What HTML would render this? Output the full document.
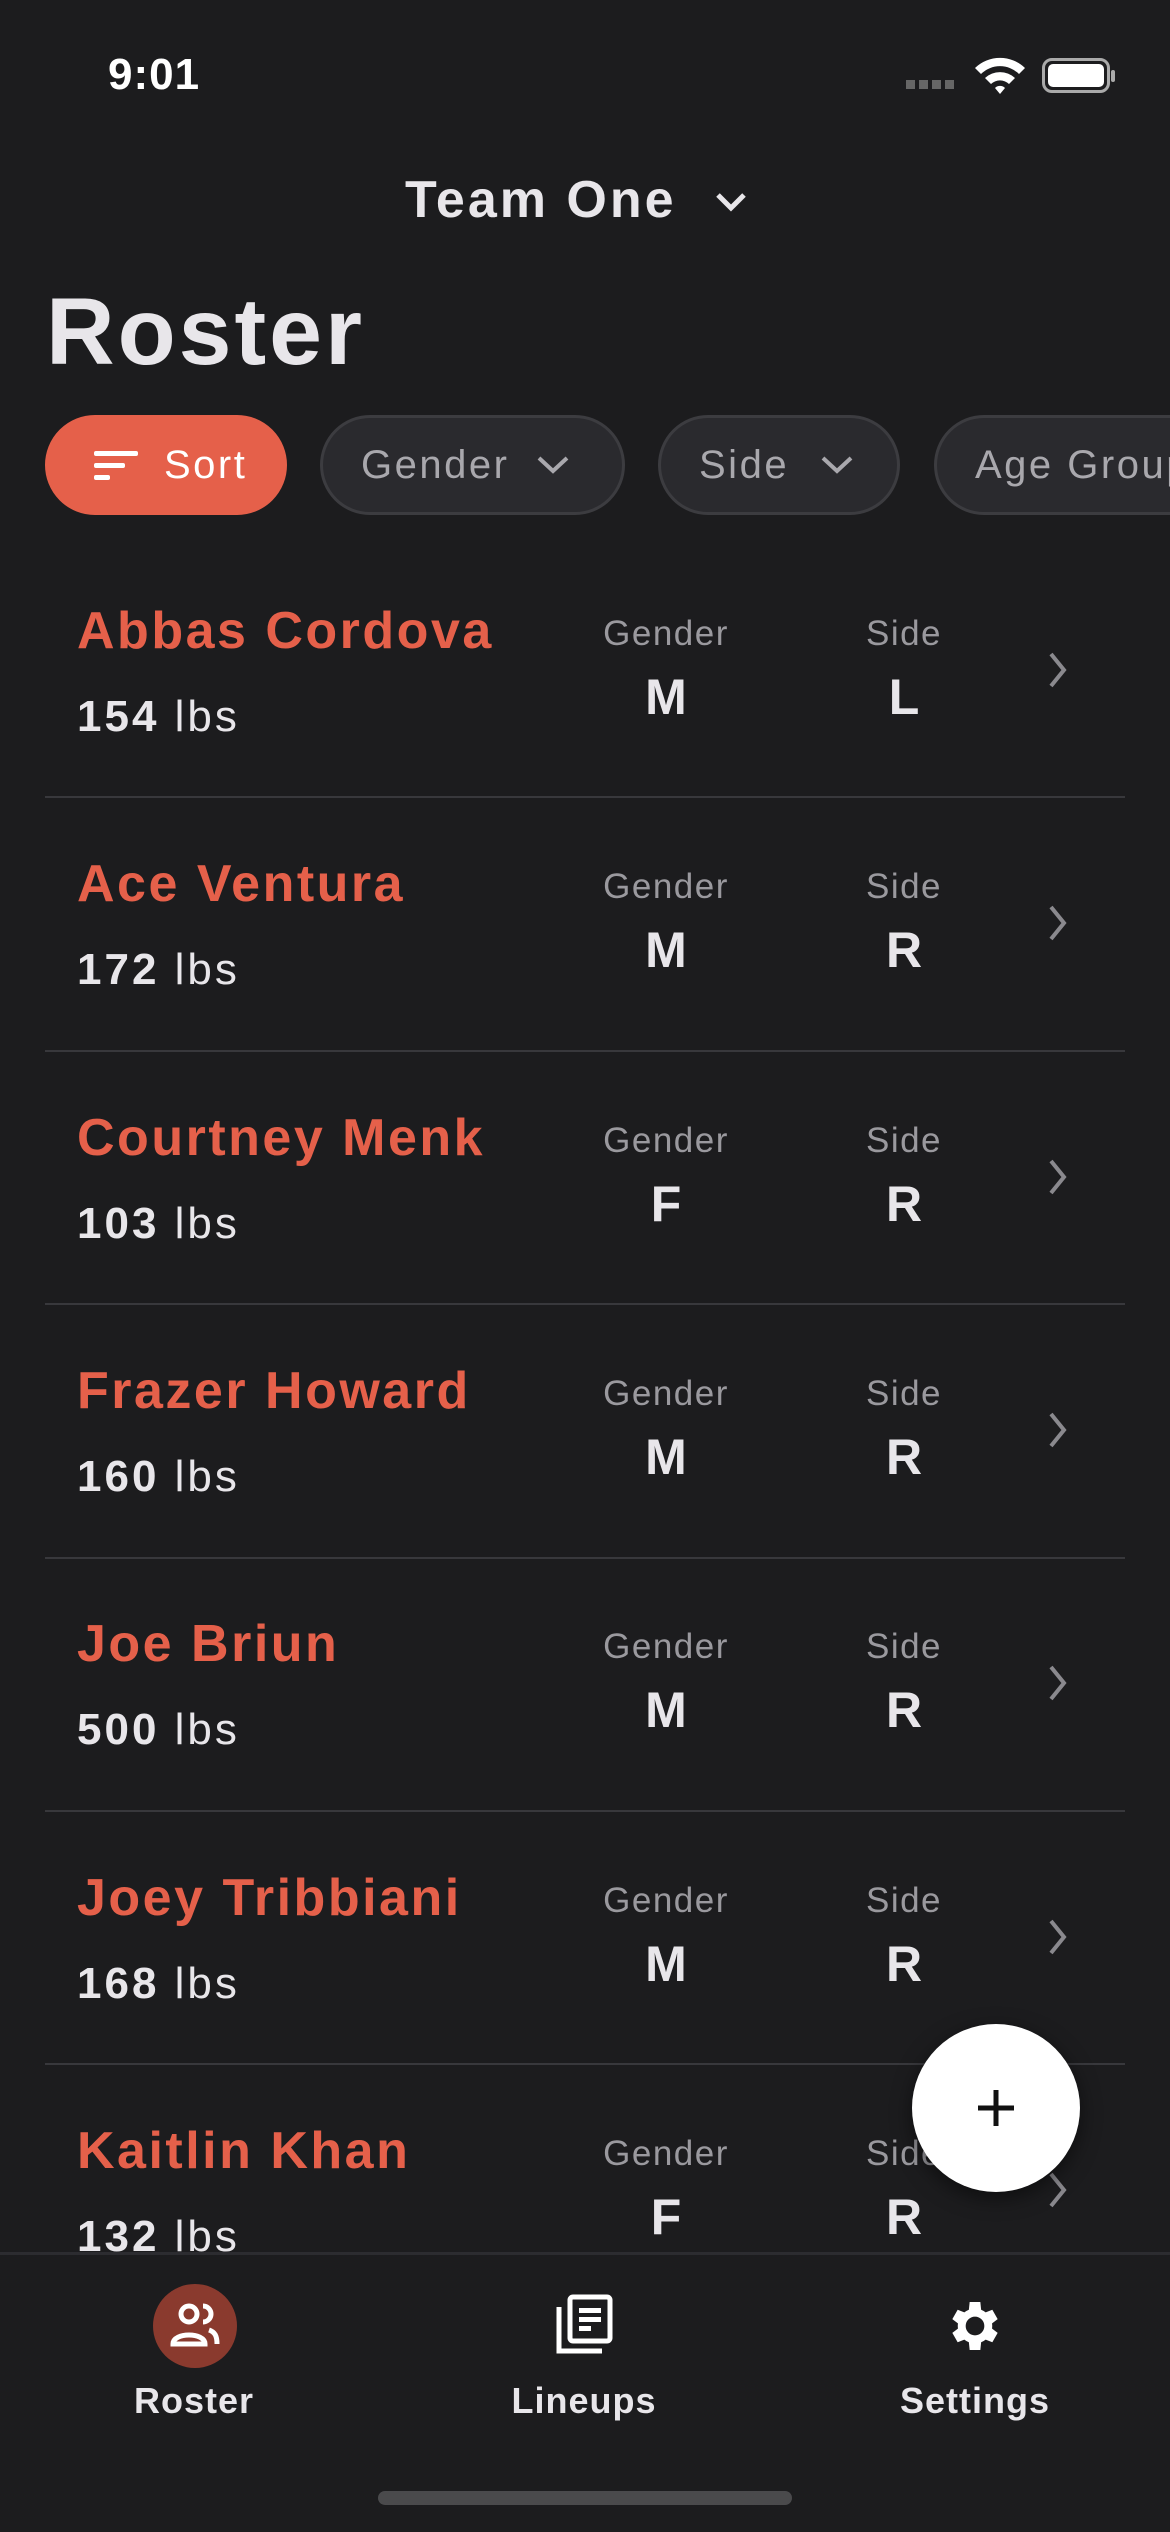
<!DOCTYPE html>
<html><head><meta charset="utf-8"><style>
*{margin:0;padding:0;box-sizing:border-box}
body{width:1170px;height:2532px;background:#1c1c1e;font-family:"Liberation Sans",sans-serif;color:#e8e6ea;position:relative;overflow:hidden}
.abs{position:absolute}
.chip{position:absolute;top:415px;height:100px;border-radius:50px;border:3px solid #3c3c40;background:#2a2a2e;color:#a9a8ad;font-size:40px;letter-spacing:2.5px;display:flex;align-items:center;padding-left:38px;white-space:nowrap}
.row{position:absolute;left:0;width:1170px;height:253px}
.name{position:absolute;left:77px;font-size:52px;letter-spacing:2.5px;font-weight:bold;color:#e5604a}
.lbs{position:absolute;left:77px;font-size:44px;letter-spacing:3px;color:#e8e6ea}
.lbs b{font-weight:bold}
.lab{position:absolute;width:200px;text-align:center;font-size:35px;letter-spacing:1.5px;color:#9a999e}
.val{position:absolute;width:200px;text-align:center;font-size:50px;font-weight:bold;color:#e8e6ea}
.sep{position:absolute;left:45px;width:1080px;height:2px;background:#38383c}
.nav{position:absolute;font-size:36px;letter-spacing:1px;font-weight:bold;color:#e8e6ea;width:300px;text-align:center;top:2380px}
</style></head><body>
<div class="abs" style="left:108px;top:50px;font-size:44px;letter-spacing:1px;font-weight:bold;color:#fff">9:01</div>
<div class="abs" style="left:906px;top:80px;width:50px;height:9px;background:repeating-linear-gradient(90deg,#666 0 9px,transparent 9px 13px)"></div>
<svg class="abs" style="left:972px;top:54px" width="56" height="42" viewBox="0 0 56 42"><path d="M3 14 A36 36 0 0 1 53 14 L47 20 A27 27 0 0 0 9 20Z M13 24 A22 22 0 0 1 43 24 L37 30 A13 13 0 0 0 19 30Z M23 34 A7 7 0 0 1 33 34 L28 40Z" fill="#fff"/></svg>
<div class="abs" style="left:1042px;top:58px;width:68px;height:35px;border:3px solid #aaa;border-radius:10px;padding:3px"><div style="width:100%;height:100%;background:#fff;border-radius:5px"></div></div>
<div class="abs" style="left:1111px;top:70px;width:4px;height:12px;background:#aaa;border-radius:2px"></div>
<div class="abs" style="left:405px;top:170px;font-size:52px;letter-spacing:3px;font-weight:bold">Team One</div>
<svg class="abs" style="left:714px;top:190px" width="34" height="24"><path d="M4 5 L17 18 L30 5" stroke="#e8e6ea" stroke-width="5" fill="none"/></svg>
<div class="abs" style="left:46px;top:278px;font-size:95px;letter-spacing:3px;font-weight:bold">Roster</div>
<div class="chip" style="left:45px;width:242px;background:#e5604a;border-color:#e5604a;color:#fff;padding-left:44px">
<svg width="48" height="40" style="margin-right:24px"><rect x="2" y="6" width="44" height="5" rx="2" fill="#fff"/><rect x="2" y="18" width="31" height="5" rx="2" fill="#fff"/><rect x="2" y="30" width="16" height="5" rx="2" fill="#fff"/></svg>Sort</div>
<div class="chip" style="left:320px;width:305px">Gender<svg width="40" height="24" style="margin-left:24px"><path d="M6 5 L20 18 L34 5" stroke="#a9a8ad" stroke-width="4" fill="none"/></svg></div>
<div class="chip" style="left:658px;width:242px">Side<svg width="40" height="24" style="margin-left:28px"><path d="M6 5 L20 18 L34 5" stroke="#a9a8ad" stroke-width="4" fill="none"/></svg></div>
<div class="chip" style="left:934px;width:320px">Age Group</div>

<div class="row" style="top:544px"><div class="name" style="top:57px">Abbas Cordova</div><div class="lbs" style="top:148px"><b>154</b> lbs</div><div class="lab" style="left:566px;top:70px">Gender</div><div class="val" style="left:566px;top:124px">M</div><div class="lab" style="left:804px;top:70px">Side</div><div class="val" style="left:804px;top:124px">L</div><svg class="abs" style="left:1046px;top:106px" width="24" height="40"><path d="M5 4 L18 20 L5 36" stroke="#8a898e" stroke-width="4" fill="none"/></svg></div>
<div class="sep" style="top:796px"></div>
<div class="row" style="top:797px"><div class="name" style="top:57px">Ace Ventura</div><div class="lbs" style="top:148px"><b>172</b> lbs</div><div class="lab" style="left:566px;top:70px">Gender</div><div class="val" style="left:566px;top:124px">M</div><div class="lab" style="left:804px;top:70px">Side</div><div class="val" style="left:804px;top:124px">R</div><svg class="abs" style="left:1046px;top:106px" width="24" height="40"><path d="M5 4 L18 20 L5 36" stroke="#8a898e" stroke-width="4" fill="none"/></svg></div>
<div class="sep" style="top:1050px"></div>
<div class="row" style="top:1051px"><div class="name" style="top:57px">Courtney Menk</div><div class="lbs" style="top:148px"><b>103</b> lbs</div><div class="lab" style="left:566px;top:70px">Gender</div><div class="val" style="left:566px;top:124px">F</div><div class="lab" style="left:804px;top:70px">Side</div><div class="val" style="left:804px;top:124px">R</div><svg class="abs" style="left:1046px;top:106px" width="24" height="40"><path d="M5 4 L18 20 L5 36" stroke="#8a898e" stroke-width="4" fill="none"/></svg></div>
<div class="sep" style="top:1303px"></div>
<div class="row" style="top:1304px"><div class="name" style="top:57px">Frazer Howard</div><div class="lbs" style="top:148px"><b>160</b> lbs</div><div class="lab" style="left:566px;top:70px">Gender</div><div class="val" style="left:566px;top:124px">M</div><div class="lab" style="left:804px;top:70px">Side</div><div class="val" style="left:804px;top:124px">R</div><svg class="abs" style="left:1046px;top:106px" width="24" height="40"><path d="M5 4 L18 20 L5 36" stroke="#8a898e" stroke-width="4" fill="none"/></svg></div>
<div class="sep" style="top:1557px"></div>
<div class="row" style="top:1557px"><div class="name" style="top:57px">Joe Briun</div><div class="lbs" style="top:148px"><b>500</b> lbs</div><div class="lab" style="left:566px;top:70px">Gender</div><div class="val" style="left:566px;top:124px">M</div><div class="lab" style="left:804px;top:70px">Side</div><div class="val" style="left:804px;top:124px">R</div><svg class="abs" style="left:1046px;top:106px" width="24" height="40"><path d="M5 4 L18 20 L5 36" stroke="#8a898e" stroke-width="4" fill="none"/></svg></div>
<div class="sep" style="top:1810px"></div>
<div class="row" style="top:1811px"><div class="name" style="top:57px">Joey Tribbiani</div><div class="lbs" style="top:148px"><b>168</b> lbs</div><div class="lab" style="left:566px;top:70px">Gender</div><div class="val" style="left:566px;top:124px">M</div><div class="lab" style="left:804px;top:70px">Side</div><div class="val" style="left:804px;top:124px">R</div><svg class="abs" style="left:1046px;top:106px" width="24" height="40"><path d="M5 4 L18 20 L5 36" stroke="#8a898e" stroke-width="4" fill="none"/></svg></div>
<div class="sep" style="top:2063px"></div>
<div class="row" style="top:2064px;height:188px;overflow:hidden"><div class="name" style="top:57px">Kaitlin Khan</div><div class="lbs" style="top:148px"><b>132</b> lbs</div><div class="lab" style="left:566px;top:70px">Gender</div><div class="val" style="left:566px;top:124px">F</div><div class="lab" style="left:804px;top:70px">Side</div><div class="val" style="left:804px;top:124px">R</div><svg class="abs" style="left:1046px;top:106px" width="24" height="40"><path d="M5 4 L18 20 L5 36" stroke="#8a898e" stroke-width="4" fill="none"/></svg></div>

<div class="abs" style="left:912px;top:2024px;width:168px;height:168px;border-radius:50%;background:#fff;box-shadow:0 6px 20px rgba(0,0,0,.5)"></div>
<svg class="abs" style="left:974px;top:2086px" width="44" height="44"><path d="M22 4 V40 M4 22 H40" stroke="#111" stroke-width="5"/></svg>

<div class="abs" style="left:0;top:2252px;width:1170px;height:280px;background:#1c1c1e;border-top:3px solid #2c2c30"></div>
<div class="abs" style="left:153px;top:2284px;width:84px;height:84px;border-radius:50%;background:#8a3a2e"></div>
<svg class="abs" style="left:165px;top:2300px" width="60" height="52" viewBox="0 0 60 52"><circle cx="24" cy="14" r="8" fill="none" stroke="#fff" stroke-width="5"/><path d="M38 6 A8 8 0 0 1 38 22" fill="none" stroke="#fff" stroke-width="5"/><path d="M8 44 C8 32 40 32 40 44Z" fill="none" stroke="#fff" stroke-width="5"/><path d="M44 30 C50 32 52 36 52 44" fill="none" stroke="#fff" stroke-width="5"/></svg>
<svg class="abs" style="left:554px;top:2293px" width="62" height="62" viewBox="0 0 62 62"><path d="M5 14 V58 H48" fill="none" stroke="#fff" stroke-width="5"/><rect x="16" y="4" width="40" height="44" rx="3" fill="none" stroke="#fff" stroke-width="5"/><rect x="25" y="15" width="22" height="5" fill="#fff"/><rect x="25" y="24" width="22" height="5" fill="#fff"/><rect x="25" y="33" width="12" height="5" fill="#fff"/></svg>
<svg class="abs" style="left:943px;top:2294px" width="64" height="64" viewBox="0 0 24 24"><path fill="#fff" d="M19.4 13a7.5 7.5 0 0 0 0-2l2.1-1.6-2-3.5-2.5 1a7 7 0 0 0-1.7-1L15 3h-4l-.3 2.9a7 7 0 0 0-1.7 1l-2.5-1-2 3.5L6.6 11a7.5 7.5 0 0 0 0 2l-2.1 1.6 2 3.5 2.5-1a7 7 0 0 0 1.7 1L11 21h4l.3-2.9a7 7 0 0 0 1.7-1l2.5 1 2-3.5zM13 15.5A3.5 3.5 0 1 1 13 8.5a3.5 3.5 0 0 1 0 7z" transform="translate(-1 0)"/></svg>
<div class="nav" style="left:44px">Roster</div>
<div class="nav" style="left:434px">Lineups</div>
<div class="nav" style="left:825px">Settings</div>
<div class="abs" style="left:378px;top:2491px;width:414px;height:14px;border-radius:7px;background:#4a4a4c"></div>
</body></html>
